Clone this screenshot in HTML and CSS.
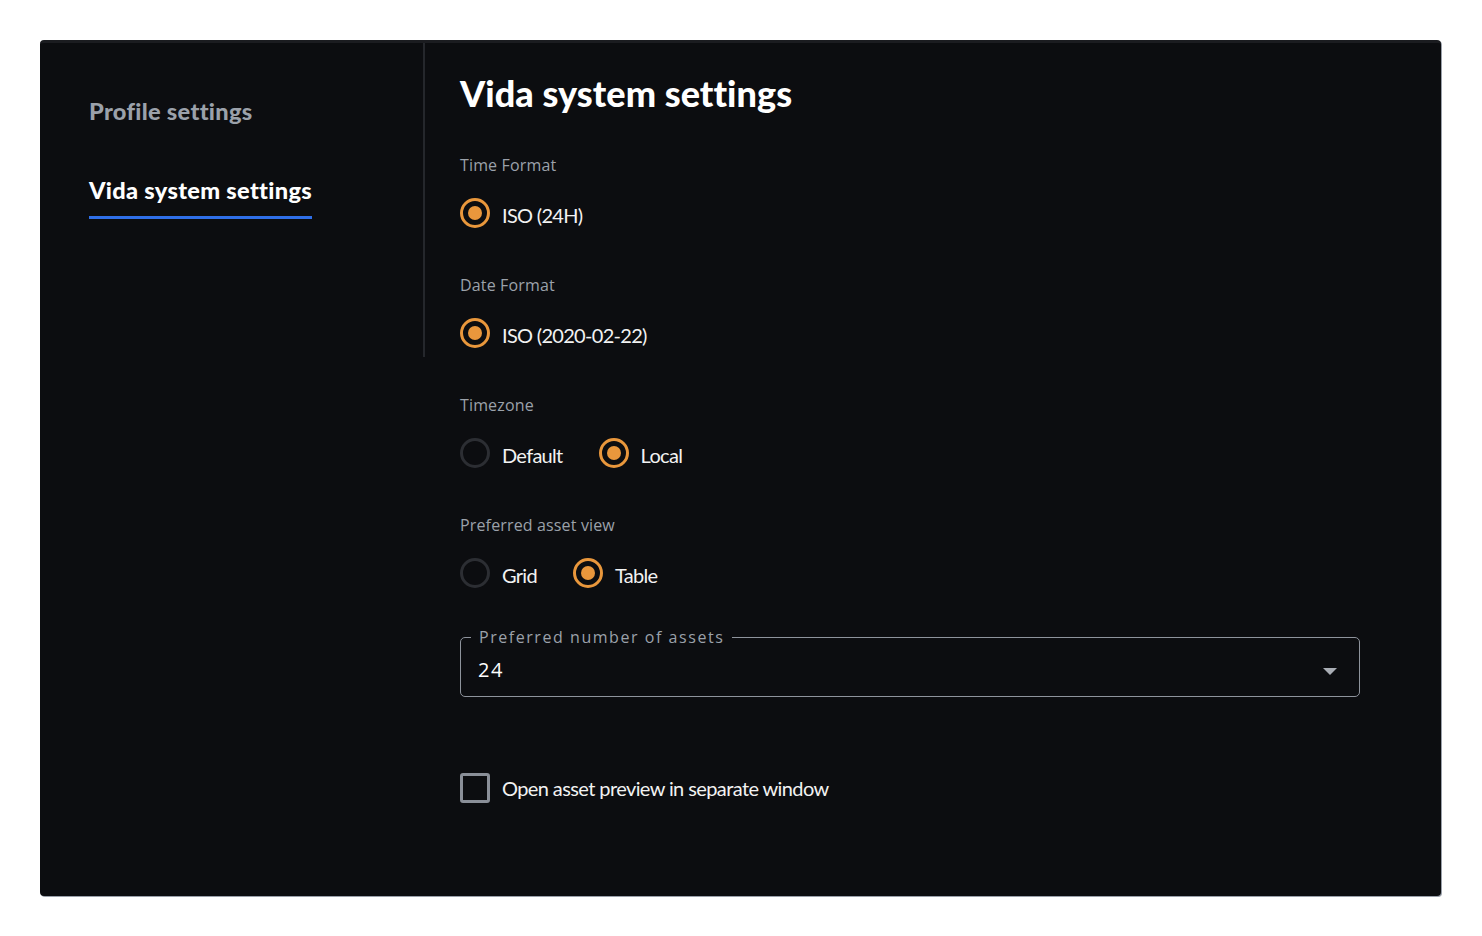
FILE: index.html
```html
<!DOCTYPE html>
<html lang="en">
<head>
<meta charset="utf-8">
<title>Vida system settings</title>
<link rel="stylesheet" href="styles.css">
</head>
<body>
<div class="panel">
  <nav class="sidebar">
    <a class="nav-item">Profile settings</a>
    <a class="nav-item active">Vida system settings</a>
  </nav>
  <main class="content">
    <h1 class="title">Vida system settings</h1>

    <section class="group">
      <div class="group-label">Time Format</div>
      <div class="options">
        <label class="option"><span class="radio checked"></span><span class="opt-text">ISO (24H)</span></label>
      </div>
    </section>

    <section class="group">
      <div class="group-label">Date Format</div>
      <div class="options">
        <label class="option"><span class="radio checked"></span><span class="opt-text">ISO (2020-02-22)</span></label>
      </div>
    </section>

    <section class="group">
      <div class="group-label">Timezone</div>
      <div class="options">
        <label class="option"><span class="radio"></span><span class="opt-text">Default</span></label>
        <label class="option"><span class="radio checked"></span><span class="opt-text">Local</span></label>
      </div>
    </section>

    <section class="group">
      <div class="group-label">Preferred asset view</div>
      <div class="options">
        <label class="option"><span class="radio"></span><span class="opt-text">Grid</span></label>
        <label class="option"><span class="radio checked"></span><span class="opt-text">Table</span></label>
      </div>
    </section>

    <fieldset class="select">
      <legend class="select-legend">Preferred number of assets</legend>
      <div class="select-row">
        <span class="select-value">24</span>
        <svg class="select-arrow" width="14" height="7" viewBox="0 0 14 7"><path d="M0 0 L14 0 L7 7 Z" fill="#a9adb5"/></svg>
      </div>
    </fieldset>

    <label class="check-row"><span class="checkbox"></span><span class="check-text">Open asset preview in separate window</span></label>
  </main>
</div>
</body>
</html>
```

FILE: styles.css
```css
html, body {
  margin: 0;
  padding: 0;
  background: #ffffff;
}
body {
  padding: 40px 41px 40px 40px;
  font-family: Lato, "Open Sans", sans-serif;
}
.panel {
  display: flex;
  align-items: flex-start;
  height: 853px;
  background: #0c0d10;
  border-top: 3px solid #1b1c20;
  border-radius: 4px;
  box-shadow: 1px 1px 0 #9aa0aa;
}
.sidebar {
  width: 385px;
  height: 314px;
  box-sizing: border-box;
  padding: 54px 0 0 49px;
  border-right: 2px solid #25272c;
  display: flex;
  flex-direction: column;
  align-items: flex-start;
  gap: 51px;
}
.nav-item {
  font-size: 23.6px;
  font-weight: 900;
  line-height: 28px;
  color: #9ba1aa;
  letter-spacing: 0.3px;
}
.nav-item.active {
  color: #ffffff;
  padding-bottom: 12px;
  border-bottom: 3px solid #2f6fe8;
}
.content {
  flex: 1;
  padding: 30px 81px 0 35px;
}
.title {
  margin: 0 0 42px 0;
  font-size: 36px;
  line-height: 40px;
  font-weight: 900;
  color: #ffffff;
  letter-spacing: 0.05px;
}
.group {
  margin-bottom: 47px;
}
.group-label {
  font-family: "Open Sans", sans-serif;
  font-size: 16px;
  line-height: 20px;
  color: #9ba1aa;
  margin-bottom: 23px;
  letter-spacing: 0.15px;
}
.options {
  display: flex;
  height: 30px;
  align-items: center;
  gap: 36px;
}
.option {
  display: flex;
  align-items: center;
  gap: 12px;
}
.radio {
  width: 30px;
  height: 30px;
  box-sizing: border-box;
  border-radius: 50%;
  border: 3px solid #2c2e33;
  display: flex;
  align-items: center;
  justify-content: center;
}
.radio.checked {
  border-color: #e9973c;
}
.radio.checked::after {
  content: "";
  width: 14px;
  height: 14px;
  border-radius: 50%;
  background: #e9973c;
}
.opt-text {
  font-size: 20px;
  line-height: 30px;
  padding-top: 4px;
  color: #f2f2f2;
  letter-spacing: -0.7px;
}
.select {
  margin: -7px 0 0 0;
  padding: 0 22px 0 10px;
  height: 69px;
  box-sizing: border-box;
  border: 1px solid #8e939c;
  border-radius: 5px;
}
.select-legend {
  padding: 0 8px;
  font-family: "Open Sans", sans-serif;
  font-size: 16px;
  line-height: 18px;
  color: #9ba1aa;
  letter-spacing: 1.55px;
}
.select-row {
  display: flex;
  align-items: center;
  justify-content: space-between;
  height: 50px;
  box-sizing: border-box;
  padding: 0 0 4px 7px;
}
.select-value {
  font-family: "Open Sans", sans-serif;
  font-size: 20px;
  color: #ffffff;
  letter-spacing: 1.5px;
}
.select-arrow {
  display: block;
  margin-top: 4px;
}
.check-row {
  margin-top: 76px;
  display: flex;
  align-items: center;
  gap: 12px;
  height: 30px;
}
.checkbox {
  width: 30px;
  height: 30px;
  box-sizing: border-box;
  border: 3px solid #8a8f98;
  border-radius: 3px;
}
.check-text {
  font-size: 20px;
  line-height: 30px;
  color: #f2f2f2;
  letter-spacing: -0.6px;
}
```
